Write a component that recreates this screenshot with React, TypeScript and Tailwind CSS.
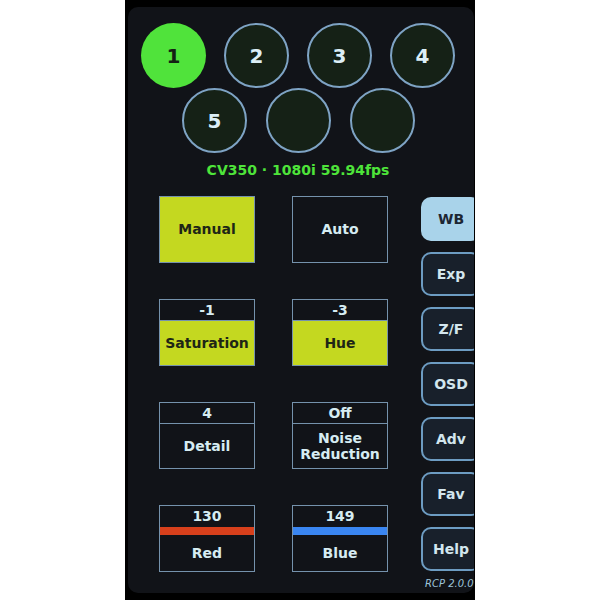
import React from 'react'

const FONT = { fontFamily: '"DejaVu Sans", "Liberation Sans", sans-serif' }

type Cam = { label: string; active?: boolean }
const ROW1: Cam[] = [{ label: '1', active: true }, { label: '2' }, { label: '3' }, { label: '4' }]
const ROW2: Cam[] = [{ label: '5' }, { label: '' }, { label: '' }]

const TABS = ['WB', 'Exp', 'Z/F', 'OSD', 'Adv', 'Fav', 'Help']

function CamButton({ cam }: { cam: Cam }) {
  return (
    <div
      className={`flex h-[65px] w-[65px] items-center justify-center rounded-full text-[20px] font-bold ${
        cam.active
          ? 'bg-[#50e33b] text-[#142014]'
          : 'border-2 border-[#7ea3c4] bg-[#152116] text-[#dceef6]'
      }`}
    >
      {cam.label}
    </div>
  )
}

// Plain toggle (Manual / Auto)
function ModeBox({ label, on }: { label: string; on?: boolean }) {
  return (
    <div
      className={`flex h-[67px] w-[96px] items-center justify-center border border-[#7592ac] text-[14px] font-bold ${
        on ? 'bg-[#c4d820] text-[#1e2616]' : 'bg-[#111318] text-[#d6ecf2]'
      }`}
    >
      {label}
    </div>
  )
}

// Value header + label cell, optional colour bar
function ValueBox({
  value, label, on, bar,
}: {
  value: string
  label: React.ReactNode
  on?: boolean
  bar?: string
}) {
  return (
    <div className="flex h-[67px] w-[96px] flex-col border border-[#7592ac] text-[14px] font-bold">
      <div
        className={`flex h-[21px] shrink-0 items-center justify-center text-[#d6ecf2] ${
          bar ? '' : 'border-b border-[#7592ac]'
        }`}
      >
        {value}
      </div>
      {bar && <div className={`h-[8px] shrink-0 ${bar}`} />}
      <div
        className={`flex flex-1 items-center justify-center text-center leading-[16px] ${
          on ? 'bg-[#c4d820] text-[#1e2616]' : 'text-[#d6ecf2]'
        }`}
      >
        {label}
      </div>
    </div>
  )
}

export default function App() {
  return (
    <div className="flex h-[600px] w-[600px] justify-center bg-white" style={FONT}>
      <div className="h-[600px] w-[350px] bg-black pb-[7px] pl-[3px] pr-[1px] pt-[7px]">
        <div className="relative flex h-full flex-col overflow-hidden rounded-[10px] bg-[#111318]">
          {/* ── Camera selector ── */}
          <div className="flex gap-[18px] pl-[13px] pt-[16px]">
            {ROW1.map((c, i) => <CamButton key={i} cam={c} />)}
          </div>
          <div className="flex gap-[19px] pl-[54px]">
            {ROW2.map((c, i) => <CamButton key={i} cam={c} />)}
          </div>
          <div className="mt-[9px] pr-[6px] text-center text-[14px] font-bold leading-[17px] text-[#4ee43a]">
            CV350 · 1080i 59.94fps
          </div>

          {/* ── Controls ── */}
          <div className="mt-[17px] flex items-start">
            <div className="grid grid-cols-[96px_96px] content-start gap-x-[37px] gap-y-[36px] pl-[31px]">
              <ModeBox label="Manual" on />
              <ModeBox label="Auto" />
              <ValueBox value="-1" label="Saturation" on />
              <ValueBox value="-3" label="Hue" on />
              <ValueBox value="4" label="Detail" />
              <ValueBox value="Off" label={<span>Noise<br />Reduction</span>} />
              <ValueBox value="130" label="Red" bar="bg-[#d8401c]" />
              <ValueBox value="149" label="Blue" bar="bg-[#3a86f2]" />
            </div>

            <div className="ml-[33px] flex flex-col">
              <div className="flex flex-col gap-[11px] pt-[1px]">
                {TABS.map((t, i) => (
                  <div
                    key={t}
                    className={`flex h-[44px] w-[60px] shrink-0 items-center justify-center rounded-[10px] text-[14px] font-bold ${
                      i === 0
                        ? 'bg-[#a9d3ea] text-[#1d2633]'
                        : 'border-2 border-[#6d9cc2] bg-[#18202b] text-[#d3e6ee]'
                    }`}
                  >
                    {t}
                  </div>
                ))}
              </div>
              <div className="mt-[7px] pl-[4px] text-[10px] italic leading-[12px] text-[#9ec4da]">
                RCP 2.0.0
              </div>
            </div>
          </div>
        </div>
      </div>
    </div>
  )
}
